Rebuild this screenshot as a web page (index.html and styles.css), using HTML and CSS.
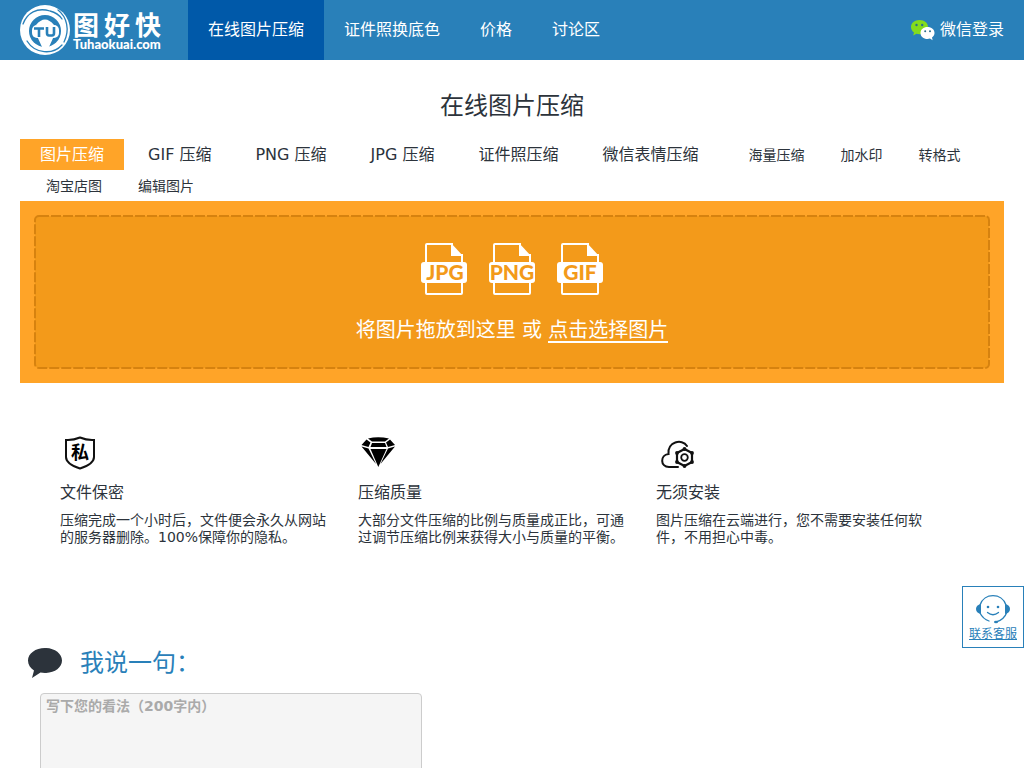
FILE: index.html
```html
<!DOCTYPE html>
<html lang="zh-CN">
<head>
<meta charset="utf-8">
<meta name="viewport" content="width=device-width, initial-scale=1">
<title>在线图片压缩</title>
<link rel="stylesheet" href="styles.css">
</head>
<body>
<header class="header">
  <a class="logo" href="#" aria-label="图好快">
    <svg class="logo-mark" viewBox="0 0 50 50" aria-hidden="true">
      <circle cx="25" cy="25" r="25" fill="#fff"/>
      <g fill="none" stroke="#2980b9" stroke-width="1.300" stroke-linecap="round">
        <path d="M3 19C7 8 17 2 30 6Q38 8 42 14"/>
        <path d="M38 5C47 12 50 25 44 37"/>
        <path d="M42 40C33 50 15 49 7 36"/>
      </g>
      <circle cx="25" cy="26" r="16" fill="#2980b9"/>
      <path d="M16 20Q25 9 34 20Z" fill="#fff"/>
      <rect x="12" y="20" width="27" height="13" rx="5" fill="#fff"/>
      <path d="M17 31H34L29 42H22Z" fill="#fff"/>
      <path d="M14 23.500H24M19 23.500V32M27 22V28Q27 30.500 29 30.500H32Q34 30.500 34 28V22" fill="none" stroke="#2980b9" stroke-width="2.600"/>
    </svg>
    <span class="logo-words">
      <span class="logo-name"><span>图</span><span>好</span><span>快</span></span>
      <span class="logo-domain">Tuhaokuai.com</span>
    </span>
  </a>
  <nav class="nav">
    <a class="nav-link active" href="#">在线图片压缩</a>
    <a class="nav-link" href="#">证件照换底色</a>
    <a class="nav-link" href="#">价格</a>
    <a class="nav-link" href="#">讨论区</a>
  </nav>
  <a class="login" href="#">
    <svg class="wechat" viewBox="0 0 26 22" aria-hidden="true">
      <path d="M9.500 1C4.500 1 1 4 1 8c0 2.300 1.200 4.200 3 5.500L3.200 16.500l3.200-1.700c1 .3 2 .4 3.100.4C14.500 15.200 18 12 18 8S14.500 1 9.500 1Z" fill="#84dc1d"/>
      <path d="M17.500 8C13.500 8 10.500 10.500 10.500 14s3 6 7 6c.9 0 1.700-.1 2.500-.4l2.600 1.600-.6-2.700c1.600-1.100 2.500-2.700 2.500-4.500 0-3.500-3-6-7-6Z" fill="#fff"/>
      <g fill="#2b6f8c"><circle cx="6.500" cy="6" r="1.200"/><circle cx="12.200" cy="6" r="1.200"/><circle cx="15.200" cy="12.300" r="1"/><circle cx="20" cy="12.300" r="1"/></g>
    </svg>
    微信登录
  </a>
</header>

<main class="main">
  <h1 class="title">在线图片压缩</h1>
  <nav class="tabs">
    <a class="tab active" href="#">图片压缩</a>
    <a class="tab" href="#">GIF 压缩</a>
    <a class="tab" href="#">PNG 压缩</a>
    <a class="tab" href="#">JPG 压缩</a>
    <a class="tab" href="#">证件照压缩</a>
    <a class="tab" href="#">微信表情压缩</a>
    <a class="tab small" href="#">海量压缩</a>
    <a class="tab small" href="#">加水印</a>
    <a class="tab small" href="#">转格式</a>
    <a class="tab small" href="#">淘宝店图</a>
    <a class="tab small" href="#">编辑图片</a>
  </nav>

  <section class="upload">
    <div class="dropzone">
      <svg class="dashes" aria-hidden="true"><rect width="100%" height="100%" rx="4" fill="none" stroke="#d6820f" stroke-width="2" stroke-dasharray="10 2"/></svg>
      <div class="formats">
        <svg class="format" viewBox="0 0 46 54" aria-hidden="true">
          <path d="M32 2H6Q5 2 5 3V51Q5 52 6 52H40Q41 52 41 51V12" fill="none" stroke="#fff" stroke-width="2"/>
          <path d="M30 1V14H42Z" fill="#fff"/><rect y="20" width="46" height="21" rx="3" fill="#fff"/>
          <text class="format-name" x="24" y="38">JPG</text>
        </svg>
        <svg class="format" viewBox="0 0 46 54" aria-hidden="true">
          <path d="M32 2H6Q5 2 5 3V51Q5 52 6 52H40Q41 52 41 51V12" fill="none" stroke="#fff" stroke-width="2"/>
          <path d="M30 1V14H42Z" fill="#fff"/><rect y="20" width="46" height="21" rx="3" fill="#fff"/>
          <text class="format-name" x="23" y="38">PNG</text>
        </svg>
        <svg class="format" viewBox="0 0 46 54" aria-hidden="true">
          <path d="M32 2H6Q5 2 5 3V51Q5 52 6 52H40Q41 52 41 51V12" fill="none" stroke="#fff" stroke-width="2"/>
          <path d="M30 1V14H42Z" fill="#fff"/><rect y="20" width="46" height="21" rx="3" fill="#fff"/>
          <text class="format-name" x="23" y="38">GIF</text>
        </svg>
      </div>
      <p class="hint">将图片拖放到这里 或 <button class="pick" type="button">点击选择图片</button></p>
    </div>
  </section>

  <section class="features">
    <article class="feature">
      <svg class="feature-icon" viewBox="0 0 40 40" aria-hidden="true">
        <path d="M20 4.500Q27 7.500 34 7V24Q34 31 20 35.500Q6 31 6 24V7Q13 7.500 20 4.500Z" fill="none" stroke="#111" stroke-width="2"/>
        <text class="shield-text" x="20" y="26">私</text>
      </svg>
      <h2 class="feature-title">文件保密</h2>
      <p class="feature-text">压缩完成一个小时后，文件便会永久从网站的服务器删除。100%保障你的隐私。</p>
    </article>
    <article class="feature">
      <svg class="feature-icon" viewBox="0 0 40 40" aria-hidden="true">
        <path d="M10 5.500Q20 3 31 5.500L27 8.500H14Z"/>
        <path d="M8.500 6.500L12.500 9.500L10.500 14L3.500 12ZM32 6.500L28 9.500L30 14L37 12Z"/>
        <path d="M14 10H27L28.500 14H12.500Z"/>
        <path d="M3.500 13.500L10.500 15.500L18 31ZM37 13.500L30 15.500L22.500 31Z"/>
        <path d="M12.500 16H28.500L20.300 34Z"/>
      </svg>
      <h2 class="feature-title">压缩质量</h2>
      <p class="feature-text">大部分文件压缩的比例与质量成正比，可通过调节压缩比例来获得大小与质量的平衡。</p>
    </article>
    <article class="feature">
      <svg class="feature-icon" viewBox="0 0 40 40" aria-hidden="true">
        <path d="M22 34H13C4 34 4 22 12.500 21C11 9 26 5 31 13" fill="none" stroke="#111" stroke-width="2" stroke-linecap="round"/>
        <path d="M28.500 16L36 20V29L28.500 33L21 29V20Z" fill="none" stroke="#111" stroke-width="2.200"/>
        <circle cx="28.500" cy="24.500" r="3.300" fill="none" stroke="#111" stroke-width="1.800"/>
        <g fill="#111"><circle cx="28.500" cy="16" r="1.900"/><circle cx="36" cy="20" r="1.900"/><circle cx="36" cy="29" r="1.900"/><circle cx="28.500" cy="33" r="1.900"/><circle cx="21" cy="29" r="1.900"/><circle cx="21" cy="20" r="1.900"/></g>
      </svg>
      <h2 class="feature-title">无须安装</h2>
      <p class="feature-text">图片压缩在云端进行，您不需要安装任何软件，不用担心中毒。</p>
    </article>
  </section>

  <section class="comment">
    <h2 class="comment-title">
      <svg class="bubble" viewBox="0 0 34 32" aria-hidden="true"><path d="M17 1C7.500 1 0 6.500 0 13.500c0 4.300 2.400 7.700 6 10L4 31l8.500-5.400c1.400.3 3 .4 4.500.4 9.500 0 17-5.500 17-12.500S26.500 1 17 1Z" fill="#2c333b"/></svg>
      <label class="comment-label" for="message">我说一句：</label>
    </h2>
    <textarea class="message" id="message" placeholder="写下您的看法（200字内）"></textarea>
  </section>
</main>

<a class="service" href="#">
  <svg class="agent" viewBox="0 0 36 30" aria-hidden="true">
    <g fill="none" stroke="#2980b9" stroke-width="1.300" stroke-linecap="round">
      <path d="M5 11C9-1.500 27-1.500 31 11"/>
      <path d="M5 19Q8 25 14 27M32 18Q29 26 21 28"/>
      <path d="M12.500 18.500Q18 23 23.500 18.500"/>
    </g>
    <path d="M6 10V20Q1 19 1 15T6 10ZM30 10V20Q35 19 35 15T30 10Z" fill="#2980b9"/>
    <ellipse cx="21" cy="28" rx="2" ry="1.200" fill="#2980b9"/>
    <circle cx="13" cy="13" r="1.300" fill="#2980b9"/><circle cx="23" cy="13" r="1.300" fill="#2980b9"/>
  </svg>
  <span>联系客服</span>
</a>
</body>
</html>
```
FILE: styles.css
```css
* { box-sizing: border-box; }

body {
  margin: 0;
  background: #fff;
  color: #2c333b;
  font: 14px/17px "DejaVu Sans", "Noto Sans CJK SC", sans-serif;
}

a { color: inherit; text-decoration: none; }
h1, h2, p { margin: 0; font-weight: 400; }

.header {
  display: flex;
  height: 60px;
  padding: 0 20px;
  background: #2980b9;
  color: #fff;
  font-size: 16px;
  line-height: 60px;
}

.logo { display: flex; align-items: center; gap: 3px; width: 168px; }
.logo-mark { width: 50px; height: 50px; }
.logo-words { display: flex; flex-direction: column; width: 88px; }
.logo-name {
  display: flex;
  justify-content: space-between;
  font: 700 26px/27px "Noto Sans CJK SC", sans-serif;
}
.logo-domain { font: 900 13px/14px Lato, sans-serif; }

.nav { display: flex; }
.nav-link { padding: 0 20px; }
.nav-link.active { background: #0059a9; }

.login { display: flex; align-items: center; gap: 4px; margin-left: auto; }
.wechat { width: 26px; height: 22px; }

.main { padding: 0 20px; }
.title { padding: 30px 0 17px; font-size: 24px; line-height: 32px; text-align: center; }

.tabs { display: flex; flex-wrap: wrap; column-gap: 4px; font-size: 16px; line-height: 31px; }
.tab { padding: 0 20px; }
.tab.active { background: #ffa428; color: #fff; }
.tab.small { height: 31px; padding: 0 6px 0 26px; font-size: 14px; line-height: 33px; }

.upload { padding: 15px; background: #ffa428; }
.dropzone {
  position: relative;
  padding: 26px 0 24px;
  border-radius: 4px;
  background: #f39a1a;
  color: #fff;
  text-align: center;
}
.dashes { position: absolute; inset: 0; width: 100%; height: 100%; overflow: visible; }
.formats { display: flex; justify-content: center; gap: 22px; }
.format { width: 46px; height: 54px; }
.format-name { fill: #f39a1a; font: 900 21px Lato, sans-serif; text-anchor: middle; }
.hint { position: relative; padding-top: 20px; font-size: 20px; line-height: 28px; }
.pick {
  padding: 0;
  border: 0;
  border-bottom: 2px solid #fff;
  background: none;
  color: inherit;
  font: inherit;
  line-height: 22px;
  cursor: pointer;
}

.features {
  display: grid;
  grid-template-columns: repeat(3, 1fr);
  gap: 30px;
  padding: 50px 80px 0 40px;
}
.feature-icon { display: block; width: 40px; height: 40px; }
.shield-text { font: 700 18px "Noto Sans CJK SC", sans-serif; text-anchor: middle; }
.feature-title { padding: 8px 0 7px; font-size: 16px; line-height: 24px; }

.comment { padding-top: 101px; }
.comment-title {
  display: flex;
  align-items: center;
  gap: 18px;
  padding-left: 8px;
  color: #2980b9;
  font-size: 24px;
  line-height: 32px;
}
.comment-label { font-family: "DejaVu Sans", "Noto Sans CJK TC", sans-serif; }
.bubble { width: 34px; height: 32px; }
.message {
  display: block;
  width: 382px;
  max-width: 100%;
  height: 120px;
  margin: 14px 20px 0;
  padding: 4px 5px;
  border: 1px solid #ccc;
  border-radius: 4px;
  background: #f5f5f5;
  font: 700 14px/17px "DejaVu Sans", "Noto Sans CJK SC", sans-serif;
  resize: none;
}
.message::placeholder { color: #aaa; opacity: 1; }

.service {
  position: fixed;
  right: 0;
  bottom: 120px;
  display: flex;
  flex-direction: column;
  align-items: center;
  gap: 2px;
  width: 62px;
  padding: 7px 0 5px;
  border: 1px solid #2980b9;
  background: #fff;
  color: #2980b9;
  font-size: 12px;
  line-height: 16px;
  text-decoration: underline;
}
.agent { width: 36px; height: 30px; }
```
